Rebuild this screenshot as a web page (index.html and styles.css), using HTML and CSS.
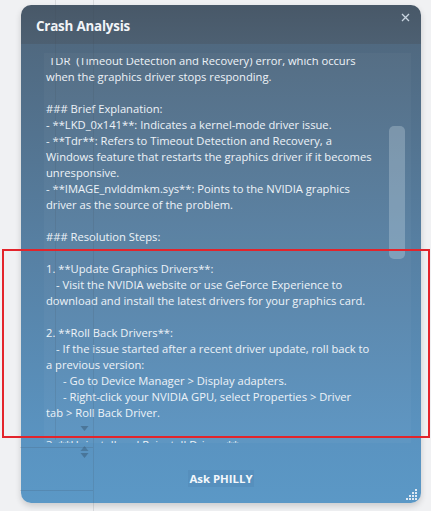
FILE: index.html
```html
<!DOCTYPE html>
<html>
<head>
<meta charset="utf-8">
<link rel="stylesheet" href="styles.css">
</head>
<body>
<div class="stage">
  <div class="panel">
    <div class="header">
      <span class="title">Crash Analysis</span>
      <svg class="close" width="9" height="9" viewBox="0 0 9 9"><path d="M1 1L8 8M8 1L1 8" stroke="#c9d5e1" stroke-width="1.3" fill="none"/></svg>
    </div>
    <div class="body">
      <div class="scrollbox">
        <div class="viewport">
<div class="text">The error code indicates a display driver crash, specifically a
`TDR` (Timeout Detection and Recovery) error, which occurs
when the graphics driver stops responding.

### Brief Explanation:
- **LKD_0x141**: Indicates a kernel-mode driver issue.
- **Tdr**: Refers to Timeout Detection and Recovery, a
Windows feature that restarts the graphics driver if it becomes
unresponsive.
- **IMAGE_nvlddmkm.sys**: Points to the NVIDIA graphics
driver as the source of the problem.

### Resolution Steps:

1. **Update Graphics Drivers**:
<span class="i1"></span>- Visit the NVIDIA website or use GeForce Experience to
download and install the latest drivers for your graphics card.

2. **Roll Back Drivers**:
<span class="i1"></span>- If the issue started after a recent driver update, roll back to
a previous version:
<span class="i2"></span>- Go to Device Manager &gt; Display adapters.
<span class="i2"></span>- Right-click your NVIDIA GPU, select Properties &gt; Driver
tab &gt; Roll Back Driver.

3. **Uninstall and Reinstall Drivers**:
<span class="i1"></span>- Use Display Driver Uninstaller (DDU) to remove drivers.</div>
        </div>
        <div class="scrollbar"><div class="thumb"></div></div>
      </div>
      <div class="footer"><span class="ask">Ask PHILLY</span></div>
    </div>
    <svg class="grip" width="12" height="12" viewBox="0 0 12 12">
      <g fill="#dfe9f3">
        <rect x="9" y="0" width="2" height="2"/>
        <rect x="6" y="3" width="2" height="2"/><rect x="9" y="3" width="2" height="2"/>
        <rect x="3" y="6" width="2" height="2"/><rect x="6" y="6" width="2" height="2"/><rect x="9" y="6" width="2" height="2"/>
        <rect x="0" y="9" width="2" height="2"/><rect x="3" y="9" width="2" height="2"/><rect x="6" y="9" width="2" height="2"/><rect x="9" y="9" width="2" height="2"/>
      </g>
    </svg>
  </div>
  <div class="ghost">
    <div class="vline v1"></div>
    <div class="vline v2"></div>
    <div class="hline h1"></div>
    <div class="hline h2"></div>
    <svg class="arrows" width="9" height="36" viewBox="0 0 9 36">
      <path d="M0.5 0H8.5L4.5 5Z" fill="rgba(40,60,80,0.35)"/>
      <path d="M0.5 25H8.5L4.5 20Z" fill="rgba(40,60,80,0.3)"/>
      <path d="M0.5 27H8.5L4.5 32Z" fill="rgba(40,60,80,0.35)"/>
    </svg>
  </div>
  <div class="annotation"></div>
</div>
</body>
</html>
```
FILE: styles.css
```css
html, body {
  margin: 0;
  padding: 0;
}
body {
  background: #f0f1f3;
  width: 431px;
  height: 511px;
  overflow: hidden;
}
.stage {
  position: relative;
  width: 431px;
  height: 511px;
  padding-top: 5px;
  box-sizing: border-box;
}
.panel {
  position: relative;
  margin-left: 21px;
  width: 400px;
  height: 498px;
  border-radius: 10px;
  overflow: hidden;
  display: flex;
  flex-direction: column;
  box-shadow: 0 3px 6px rgba(0, 0, 0, 0.16);
  z-index: 1;
}
.header {
  height: 39px;
  flex: none;
  display: flex;
  align-items: center;
  padding-left: 15px;
  background: linear-gradient(180deg, #485868 0%, #4d6072 100%);
}
.title {
  font-family: "Open Sans", "Noto Sans", sans-serif;
  font-weight: 700;
  font-size: 13.4px;
  letter-spacing: -0.2px;
  color: #f2f5f8;
  margin-top: 2px;
}
.close {
  position: absolute;
  top: 8px;
  right: 11px;
}
.body {
  flex: 1;
  display: flex;
  flex-direction: column;
  background: linear-gradient(180deg, #506980 0%, #5780a3 45%, #5a93c0 85%, #5b98c6 100%);
}
.scrollbox {
  margin: 9px 10px 0 23px;
  height: 390px;
  flex: none;
  display: flex;
  background: rgba(255, 255, 255, 0.03);
}
.viewport {
  flex: 1;
  margin-top: 5px;
  padding-left: 2px;
  overflow: hidden;
}
.text {
  margin-top: -21px;
  white-space: pre;
  font-family: "Open Sans", "Noto Sans", sans-serif;
  font-size: 11.2px;
  line-height: 16px;
  color: #eef3f8;
}
.i1 {
  display: inline-block;
  width: 10px;
}
.i2 {
  display: inline-block;
  width: 17px;
}
.scrollbar {
  width: 16px;
  margin-right: 6px;
  padding-top: 73px;
  flex: none;
}
.thumb {
  height: 133px;
  border-radius: 5px;
  background: rgba(220, 232, 242, 0.28);
}
.footer {
  flex: 1;
  display: flex;
  justify-content: center;
  align-items: center;
  padding-top: 10px;
}
.ask {
  font-family: "Open Sans", "Noto Sans", sans-serif;
  font-weight: 700;
  font-size: 11.4px;
  color: #f3f7fb;
  padding: 1px 1px;
  background: rgba(60, 100, 140, 0.12);
}
.grip {
  position: absolute;
  right: 3px;
  bottom: 2px;
}
.ghost {
  position: absolute;
  inset: 0;
  pointer-events: none;
  z-index: 2;
}
.vline {
  position: absolute;
  top: 0;
  width: 1px;
  background: rgba(60, 70, 80, 0.13);
}
.v1 {
  left: 55px;
  height: 440px;
}
.v2 {
  left: 93px;
  height: 511px;
}
.hline {
  position: absolute;
  left: 20px;
  width: 73px;
  height: 1px;
  background: rgba(60, 70, 80, 0.16);
}
.h1 {
  top: 447px;
}
.h2 {
  top: 490px;
}
.arrows {
  position: absolute;
  left: 80px;
  top: 426px;
}
.annotation {
  position: absolute;
  left: 2px;
  top: 249px;
  width: 428px;
  height: 189px;
  box-sizing: border-box;
  border: 2px solid #e3242b;
  z-index: 3;
  pointer-events: none;
}
```
